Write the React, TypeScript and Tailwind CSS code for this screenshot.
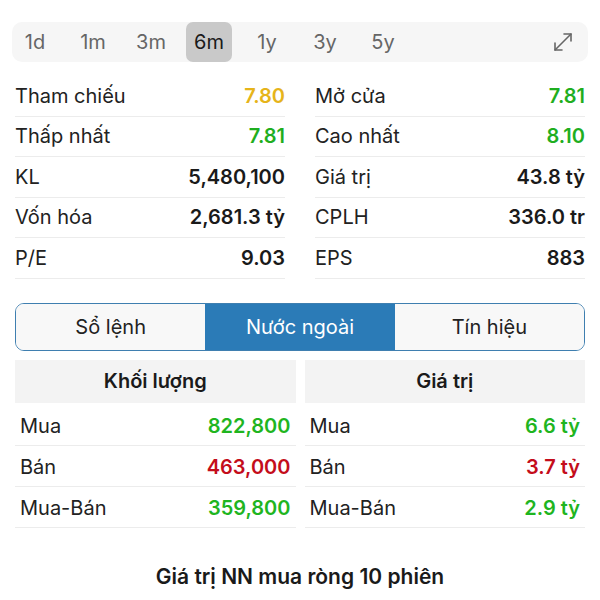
import { useState } from "react";

const PERIODS = ["1d", "1m", "3m", "6m", "1y", "3y", "5y"];

type Stat = { label: string; value: string; color?: string };

const LEFT: Stat[] = [
  { label: "Tham chiếu", value: "7.80", color: "text-[#e6b41a]" },
  { label: "Thấp nhất", value: "7.81", color: "text-[#1fae1f]" },
  { label: "KL", value: "5,480,100" },
  { label: "Vốn hóa", value: "2,681.3 tỷ" },
  { label: "P/E", value: "9.03" },
];

const RIGHT: Stat[] = [
  { label: "Mở cửa", value: "7.81", color: "text-[#1fae1f]" },
  { label: "Cao nhất", value: "8.10", color: "text-[#1fae1f]" },
  { label: "Giá trị", value: "43.8 tỷ" },
  { label: "CPLH", value: "336.0 tr" },
  { label: "EPS", value: "883" },
];

const TABS = ["Sổ lệnh", "Nước ngoài", "Tín hiệu"];

const GREEN = "text-[#1fb51f]";
const RED = "text-[#c40d1b]";

const VOL: Stat[] = [
  { label: "Mua", value: "822,800", color: GREEN },
  { label: "Bán", value: "463,000", color: RED },
  { label: "Mua-Bán", value: "359,800", color: GREEN },
];

const VAL: Stat[] = [
  { label: "Mua", value: "6.6 tỷ", color: GREEN },
  { label: "Bán", value: "3.7 tỷ", color: RED },
  { label: "Mua-Bán", value: "2.9 tỷ", color: GREEN },
];

function StatColumn({ rows }: { rows: Stat[] }) {
  return (
    <div className="flex flex-col">
      {rows.map((r) => (
        <div
          key={r.label}
          className="flex h-[40.5px] items-center justify-between border-b border-[#ececec]"
        >
          <span className="text-[20px] text-[#222]">{r.label}</span>
          <span className={["text-[20px] font-semibold", r.color ?? "text-[#1a1a1a]"].join(" ")}>
            {r.value}
          </span>
        </div>
      ))}
    </div>
  );
}

function ForeignTable({ title, rows }: { title: string; rows: Stat[] }) {
  return (
    <div className="flex flex-col">
      <div className="mb-[2px] flex h-[43px] items-center justify-center bg-[#f3f3f3] text-[20px] font-semibold text-[#1a1a1a]">
        {title}
      </div>
      {rows.map((r) => (
        <div
          key={r.label}
          className="flex h-[41px] items-center justify-between border-b border-[#ececec] px-[5px] pt-[3px]"
        >
          <span className="text-[20px] text-[#222]">{r.label}</span>
          <span className={["text-[20px] font-semibold", r.color].join(" ")}>{r.value}</span>
        </div>
      ))}
    </div>
  );
}

export default function App() {
  const [period, setPeriod] = useState("6m");
  const [tab, setTab] = useState("Nước ngoài");

  return (
    <div
      className="h-[600px] w-[600px] overflow-hidden bg-white px-[15px] pt-[22px]"
      style={{ fontFamily: "Inter, 'Noto Sans', sans-serif" }}
    >
      {/* period selector */}
      <div className="-mx-[3px] flex h-[40px] items-center rounded-[10px] bg-[#f6f6f6] pr-[14px]">
        {PERIODS.map((p) => {
          const active = p === period;
          return (
            <button
              key={p}
              onClick={() => setPeriod(p)}
              className={[
                "mr-[12px] flex h-[40px] w-[46px] items-center justify-center rounded-[7px] text-[20px]",
                active ? "bg-[#c9c9c9] text-[#1a1a1a]" : "text-[#666]",
              ].join(" ")}
            >
              {p}
            </button>
          );
        })}
        <div className="flex-1" />
        <svg width="22" height="22" viewBox="0 0 22 22" fill="none" stroke="#666" strokeWidth="1.6" strokeLinecap="round" strokeLinejoin="round">
          <path d="M3 19 L19 3" />
          <path d="M12 3 H19 V10" />
          <path d="M3 12 V19 H10" />
        </svg>
      </div>

      {/* stats */}
      <div className="mt-[14px] grid grid-cols-2 gap-x-[30px]">
        <StatColumn rows={LEFT} />
        <StatColumn rows={RIGHT} />
      </div>

      {/* segmented tabs */}
      <div className="mt-[24px] flex h-[48px] overflow-hidden rounded-[9px] border-[1.5px] border-[#3f7fb0]">
        {TABS.map((t) => {
          const active = t === tab;
          return (
            <button
              key={t}
              onClick={() => setTab(t)}
              className={[
                "flex flex-1 items-center justify-center text-[20px]",
                active ? "bg-[#2b7bb7] text-white" : "bg-[#f8f8f8] text-[#222]",
              ].join(" ")}
            >
              {t}
            </button>
          );
        })}
      </div>

      {/* foreign trading */}
      <div className="mt-[9px] grid grid-cols-2 gap-x-[9px]">
        <ForeignTable title="Khối lượng" rows={VOL} />
        <ForeignTable title="Giá trị" rows={VAL} />
      </div>

      <div className="mt-[33px] text-center text-[21px] font-semibold text-[#1a1a1a]">
        Giá trị NN mua ròng 10 phiên
      </div>
    </div>
  );
}
